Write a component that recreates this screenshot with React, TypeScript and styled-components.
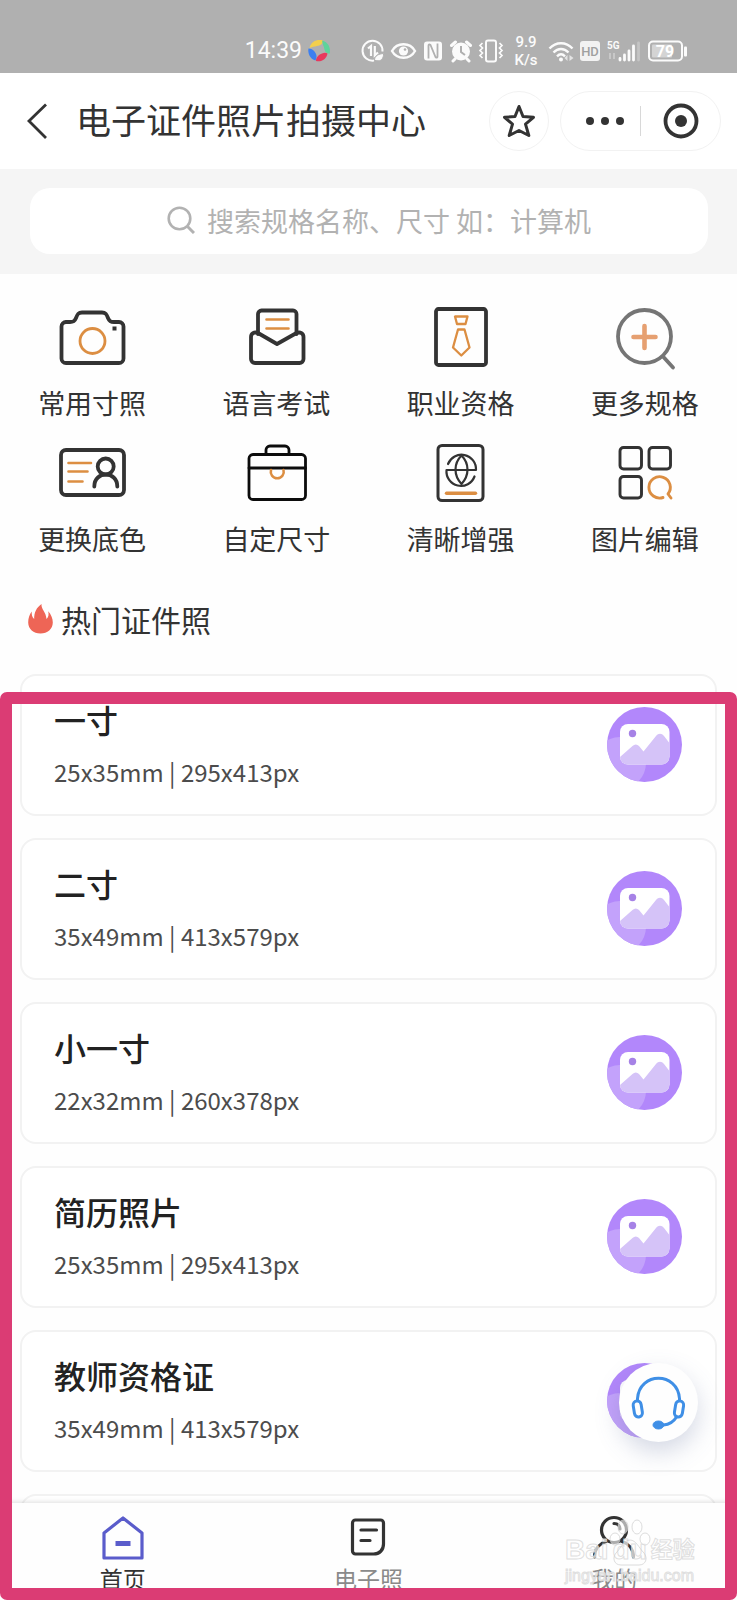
import React from "react";
import styled, { createGlobalStyle, css } from "styled-components";

const INK = "#333333";
const ORANGE = "#dc8e42";
const PURPLE = "#b287fb";
const PINK = "#db3c74";

const GlobalStyle = createGlobalStyle`
  * { box-sizing: border-box; }
  html, body { margin: 0; padding: 0; background: #ffffff; }
  body {
    font-family: "Noto Sans CJK SC", "Noto Sans", sans-serif;
    color: ${INK};
  }
  button { font: inherit; color: inherit; }
  svg { display: block; flex: none; }
`;

const Screen = styled.div`
  display: flex;
  flex-direction: column;
  height: 100vh;
  overflow: hidden;
  background: #fefefe;
`;

/* ---------- status bar ---------- */

const StatusBar = styled.header`
  display: flex;
  flex: none;
  align-items: center;
  justify-content: flex-end;
  gap: 30px;
  height: 73px;
  padding: 28px 49px 0 0;
  background: #b0b0b0;
  color: #fbfbfb;
  font-family: Roboto, sans-serif;
`;

const StatusGroup = styled.div`
  display: flex;
  align-items: center;
  gap: 5px;
`;

const Clock = styled.time`
  font-size: 23px;
  line-height: 28px;
`;

const Speed = styled.span`
  width: 34px;
  font-size: 15px;
  line-height: 18px;
  font-weight: 500;
  text-align: center;
`;

/* ---------- title bar ---------- */

const TitleBar = styled.nav`
  display: flex;
  flex: none;
  align-items: center;
  height: 96px;
  padding: 0 16px 0 18px;
  background: #ffffff;
`;

const IconButton = styled.button`
  display: flex;
  align-items: center;
  justify-content: center;
  padding: 0;
  border: 0;
  background: none;
`;

const Title = styled.h1`
  flex: 1;
  margin: 0 0 0 18px;
  padding-bottom: 4px;
  font-size: 35px;
  line-height: 48px;
  font-weight: 400;
  white-space: nowrap;
`;

const RoundButton = styled(IconButton)`
  width: 60px;
  height: 60px;
  border: 1px solid #f2f2f2;
  border-radius: 30px;
`;

const Capsule = styled.div`
  display: flex;
  align-items: center;
  width: 161px;
  height: 60px;
  margin-left: 11px;
  border: 1px solid #f2f2f2;
  border-radius: 30px;
`;

const CapsuleButton = styled(IconButton)<{ $inset?: boolean }>`
  width: 79px;
  height: 58px;
  padding-left: ${(p) => (p.$inset ? "8px" : "0")};
`;

const Divider = styled.span`
  width: 1px;
  height: 30px;
  background: #d8d8d8;
`;

/* ---------- search ---------- */

const SearchArea = styled.form`
  flex: none;
  padding: 19px 29px 20px 30px;
  background: #f5f5f5;
`;

const SearchBox = styled.label`
  display: flex;
  align-items: center;
  justify-content: center;
  gap: 12px;
  height: 66px;
  padding: 0 0 2px 24px;
  border-radius: 20px;
  background: #ffffff;
`;

const SearchInput = styled.input`
  width: 388px;
  min-width: 0;
  height: 40px;
  padding: 0;
  border: 0;
  outline: 0;
  background: none;
  font-family: inherit;
  font-size: 27px;
  color: ${INK};

  &::placeholder {
    color: #b2b2b2;
    opacity: 1;
  }
`;

/* ---------- features ---------- */

const FeatureGrid = styled.section`
  display: grid;
  flex: none;
  grid-template-columns: repeat(4, 1fr);
  row-gap: 17px;
  padding-top: 28px;
`;

const Feature = styled.button`
  display: flex;
  flex-direction: column;
  align-items: center;
  gap: 11px;
  padding: 0;
  border: 0;
  background: none;
  font-size: 27px;
  line-height: 36px;
`;

const SectionTitle = styled.h2`
  display: flex;
  flex: none;
  align-items: center;
  gap: 8px;
  margin: 42px 0 35px;
  padding-left: 28px;
  font-size: 30px;
  line-height: 40px;
  font-weight: 400;
`;

/* ---------- list ---------- */

const Highlighted = styled.main`
  position: relative;
  display: flex;
  flex: 1;
  flex-direction: column;
  min-height: 0;
`;

const HighlightFrame = styled.div`
  position: absolute;
  inset: 18px 0 0;
  border-radius: 7px;
  pointer-events: none;

  &::after {
    content: "";
    position: absolute;
    inset: 0;
    border: 12px solid ${PINK};
    border-radius: 7px;
  }
`;

const CardList = styled.ul`
  display: flex;
  flex: 1;
  flex-direction: column;
  gap: 22px;
  min-height: 0;
  margin: 0;
  padding: 0 20px;
  overflow-y: auto;
  scrollbar-width: none;
  list-style: none;
`;

const Card = styled.li`
  display: flex;
  flex: none;
  align-items: center;
  justify-content: space-between;
  height: 142px;
  padding: 0 33px 2px 32px;
  border: 2px solid #f2f2f2;
  border-radius: 16px;
  background: #ffffff;
`;

const CardText = styled.div`
  display: flex;
  flex-direction: column;
  gap: 13px;
  padding-top: 2px;
`;

const CardTitle = styled.h3`
  margin: 0;
  font-size: 32px;
  line-height: 40px;
  font-weight: 500;
  color: #222222;
`;

const CardSize = styled.p`
  margin: 0;
  font-size: 24px;
  line-height: 40px;
  color: #4c4c4c;
`;

/* ---------- floating parts ---------- */

const ServiceButton = styled.button`
  position: absolute;
  right: 39px;
  bottom: 158px;
  width: 79px;
  height: 79px;
  padding: 0;
  border: 0;
  border-radius: 50%;
  background: #fefefe;
  box-shadow: 0 10px 24px rgba(90, 105, 150, 0.26);
`;

const TabBar = styled.nav`
  position: relative;
  display: grid;
  flex: none;
  grid-template-columns: repeat(3, 1fr);
  height: 97px;
  padding-top: 12px;
  background: #fefefe;
  box-shadow: 0 -1px 5px rgba(0, 0, 0, 0.13);
`;

const Tab = styled.button<{ $active?: boolean }>`
  display: flex;
  flex-direction: column;
  align-items: center;
  gap: 3px;
  padding: 0;
  border: 0;
  background: none;
  font-size: 23px;
  line-height: 28px;
  color: #8a8a8a;
  ${(p) =>
    p.$active &&
    css`
      color: ${INK};
    `}
`;

const Watermark = styled.div`
  position: absolute;
  right: 40px;
  bottom: 14px;
  width: 132px;
  font-family: "Liberation Sans", "Noto Sans CJK SC", sans-serif;
  color: rgba(255, 255, 255, 0.7);
  -webkit-text-stroke: 1px rgba(215, 215, 215, 0.8);
  white-space: nowrap;
  pointer-events: none;
`;

const WatermarkBrand = styled.div`
  display: flex;
  align-items: center;
  gap: 4px;
  font-size: 28px;
  line-height: 32px;
  font-weight: 700;
`;

const WatermarkCn = styled.span`
  font-size: 22px;
`;

const WatermarkUrl = styled.div`
  font-size: 16px;
  line-height: 20px;
`;

const Paw = styled.svg`
  position: absolute;
  left: 44px;
  top: -18px;
`;

/* ---------- status icons ---------- */

const StatusIcons = () => (
  <>
    <svg width="24" height="24" viewBox="0 0 24 24" fill="none" stroke="#fbfbfb" strokeWidth="2">
      <path d="M21.5 12.5A10 10 0 1 0 13 21.6" />
      <path d="M7 9.500 10 7v10M17 13.500 13.800 16.500V7" strokeWidth="2.200" />
      <path d="M13.500 21.500c0-5 4-6.500 9-7 .500 5-3 8.500-7 7z" fill="#fbfbfb" stroke="#b0b0b0" strokeWidth="1" />
    </svg>
    <svg width="27" height="22" viewBox="0 0 27 22" fill="none" stroke="#fbfbfb" strokeWidth="2.400">
      <path d="M2 11c5-9 18-9 23 0-5 9-18 9-23 0z" />
      <circle cx="13.500" cy="11" r="4.600" fill="#fbfbfb" stroke="none" />
      <circle cx="15" cy="9.500" r="1.300" fill="#b0b0b0" stroke="none" />
    </svg>
    <svg width="22" height="22" viewBox="0 0 22 22">
      <rect x="2" y="1.500" width="18" height="19" rx="3" fill="#fbfbfb" />
      <path d="M6.500 18.500V5.500c0-1.500 1-1.500 2-.500l5 12c1 1 2 1 2-.500V3.500" fill="none" stroke="#b0b0b0" strokeWidth="1.800" />
    </svg>
    <svg width="24" height="24" viewBox="0 0 24 24">
      <circle cx="12" cy="12.500" r="9" fill="#fbfbfb" />
      <path d="M2.500 6.500 6.500 3M21.500 6.500 17.500 3M6 20l-2 2M18 20l2 2" stroke="#fbfbfb" strokeWidth="3" strokeLinecap="round" />
      <path d="M12 7v6l4 3" fill="none" stroke="#b0b0b0" strokeWidth="2" />
    </svg>
    <svg width="26" height="24" viewBox="0 0 26 24" fill="none" stroke="#fbfbfb" strokeWidth="2">
      <rect x="8" y="1.500" width="10" height="21" rx="2" />
      <path d="M4.500 4 2 6.500 4.500 9 2 11.500 4.500 14 2 16.500 4.500 19M21.500 4 24 6.500 21.500 9 24 11.500 21.500 14 24 16.500 21.500 19" strokeWidth="1.700" />
    </svg>
  </>
);

const SignalIcons = () => (
  <>
    <svg width="26" height="24" viewBox="0 0 26 24" fill="none" stroke="#fbfbfb" strokeWidth="2.400">
      <path d="M1.500 9.500c6.500-7 16.500-7 23 0M5.500 13.500c4.500-4.600 10.500-4.600 15 0M9 17.300c2.500-2.500 5.500-2.500 8 0" />
      <circle cx="13" cy="20.500" r="2" fill="#fbfbfb" stroke="none" />
      <path d="M19.500 16v6l-3-3zM21.500 16v6l4-3z" fill="#e4e4e4" stroke="none" />
    </svg>
    <svg width="22" height="22" viewBox="0 0 22 22">
      <rect x="1" y="1" width="20" height="20" rx="3" fill="#f2f2f2" />
      <text x="11" y="16" textAnchor="middle" fontFamily="Roboto, sans-serif" fontSize="13" fontWeight="500" fill="#a0a0a0">HD</text>
    </svg>
    <svg width="36" height="26" viewBox="0 0 36 26">
      <text x="1" y="11" fontFamily="Roboto, sans-serif" fontSize="10" fontWeight="700" fill="#fbfbfb">5G</text>
      <path d="M4 15v6M8 15v6" stroke="#cfcfcf" strokeWidth="1.500" />
      <path d="M14 20.500V22M18.500 17v5M23 13v9M27.500 8v14" stroke="#fbfbfb" strokeWidth="2.800" strokeLinecap="round" />
      <path d="M32.500 5v17" stroke="#c4c4c4" strokeWidth="2.800" strokeLinecap="round" />
    </svg>
    <svg width="41" height="24" viewBox="0 0 41 24">
      <rect x="2" y="2.500" width="33" height="19" rx="4" fill="none" stroke="#fbfbfb" strokeWidth="2" />
      <rect x="5" y="5.500" width="20" height="13" rx="1" fill="#d4d4d4" />
      <rect x="37" y="7.500" width="3" height="10" rx="1" fill="#fbfbfb" />
      <text x="18" y="18" textAnchor="middle" fontFamily="Roboto, sans-serif" fontSize="16" fontWeight="700" fill="#ffffff">79</text>
    </svg>
  </>
);

const PinwheelLogo = () => (
  <svg width="24" height="24" viewBox="0 0 24 24">
    <path d="M2.500 9C4 2.500 10 0 16 1.500c0 3.500-3 5-6 5.500-3 .500-4.500 1-7.500 2z" fill="#f3cf4c" />
    <path d="M15 1.500c6 1.500 9 7 7.800 13-3 .500-5-1.500-5.500-4.500C17 7 15.500 5.500 15 1.500z" fill="#5fd39b" />
    <path d="M20.500 14.500C19.500 20 14.500 23.500 9 22c0-4 3-6.500 6-7.500 2-.800 4-1 5.500 0z" fill="#e8395c" />
    <path d="M1.500 9.500C.500 14 3 20 8.500 21.500c2-4 1-6.500-1-9C6 10.500 4 9.500 1.500 9.500z" fill="#3c7ff0" />
  </svg>
);

/* ---------- feature icons ---------- */

const FeatureIcon = ({ stroke = INK, width = 3.8, children }: { stroke?: string; width?: number; children: React.ReactNode }) => (
  <svg width="72" height="72" viewBox="0 0 72 72" fill="none" stroke={stroke} strokeWidth={width} strokeLinecap="round" strokeLinejoin="round">
    {children}
  </svg>
);

const CameraIcon = () => (
  <FeatureIcon>
    <path d="M9.500 20H14c4 0 5-1.500 6-4 1.500-4 2.500-5.500 6-5.500h20c3.500 0 4.500 1.500 6 5.500 1 2.500 2 4 6 4h5a4.500 4.500 0 0 1 4.500 4.500v32a4.500 4.500 0 0 1-4.500 4.500H10a4.500 4.500 0 0 1-4.500-4.500v-32A4.500 4.500 0 0 1 10 20" />
    <circle cx="36.500" cy="39" r="12.500" stroke={ORANGE} strokeWidth="2.800" />
    <rect x="56.500" y="24.500" width="4" height="4" fill={INK} stroke="none" />
  </FeatureIcon>
);

const EnvelopeIcon = () => (
  <FeatureIcon>
    <path d="M18 32V12a3.500 3.500 0 0 1 3.500-3.500H53a3.500 3.500 0 0 1 3.500 3.500v20" />
    <path d="M18 31c-4-1.500-7 .500-7 4v22a4 4 0 0 0 4 4h44.500a4 4 0 0 0 4-4V35c0-3.500-3-5.500-7-4L37 42z" />
    <path d="M26.500 17.500h22M26.500 26.500h22" stroke={ORANGE} strokeWidth="2.600" />
  </FeatureIcon>
);

const TieIcon = () => (
  <FeatureIcon>
    <rect x="11" y="7" width="50" height="56" rx="2.500" />
    <path d="M30 14.500h12.500L40.500 22h-8.500zM33 27.500h6.500l5 18L36.300 53.500l-8.300-8z" stroke={ORANGE} strokeWidth="2.300" />
  </FeatureIcon>
);

const ZoomInIcon = () => (
  <FeatureIcon stroke="#757575" width={3.8}>
    <circle cx="35.500" cy="34.500" r="26.500" />
    <path d="M54 54.500 64 65.500" />
    <path d="M35.500 24v22M24.500 35h22" stroke="#e6a071" strokeWidth="4.600" />
  </FeatureIcon>
);

const IdCardIcon = () => (
  <FeatureIcon>
    <rect x="5" y="12" width="63" height="45" rx="5" />
    <path d="M12.500 25H35M12.500 33.500H31.500M12.500 43.500H26.500" stroke={ORANGE} strokeWidth="2.600" />
    <circle cx="49.700" cy="28.500" r="8" />
    <path d="M38.300 48.500c0-16 23-16 23 0" />
  </FeatureIcon>
);

const BriefcaseIcon = () => (
  <FeatureIcon stroke="#0c0c0c" width={2.8}>
    <rect x="9" y="16.500" width="56.500" height="45" rx="4" />
    <path d="M26 16V12a4 4 0 0 1 4-4h15a4 4 0 0 1 4 4v4M9 30h56.500" />
    <path d="M31 32a6.500 6.500 0 1 0 12.500 0" stroke={ORANGE} strokeWidth="2.600" />
  </FeatureIcon>
);

const PassportIcon = () => (
  <FeatureIcon width={3}>
    <rect x="13" y="7.500" width="45" height="55" rx="4" />
    <path d="M23 26a14.500 14.500 0 0 1 28 6H21.500a14.500 14.500 0 0 0 28 6.500" strokeWidth="2.200" />
    <path d="M36.500 17.500c-8 8-8 20 0 28.500 8-8.500 8-20.500 0-28.500z" strokeWidth="2.200" />
    <path d="M21.500 55.300h29" stroke={ORANGE} strokeWidth="3.400" />
  </FeatureIcon>
);

const GridSearchIcon = () => (
  <FeatureIcon width={2.9}>
    <rect x="11" y="9.500" width="21.500" height="21.500" rx="3.500" />
    <rect x="40" y="9.500" width="21.500" height="21.500" rx="3.500" />
    <rect x="11" y="38.500" width="21.500" height="21.500" rx="3.500" />
    <path d="M54 59.500a10.700 10.700 0 1 1 5-3.500L62 60" stroke={ORANGE} />
  </FeatureIcon>
);

const FlameIcon = () => (
  <svg width="25" height="30" viewBox="0 0 25 30">
    <path d="M13.500 0c-.5 5.500 4.500 7.500 5 15 2-2 2.500-4.500 1.700-7.800 3 3.300 4.600 7.300 4.600 11.300 0 6.500-5.300 11-12.300 11S.2 25 .2 18.500C.2 14 1.500 10.500 3.800 7.500c-.3 3 .2 5.500 2.400 7.500C6 8.500 8.500 3.500 13.500 0z" fill="#ee6556" />
  </svg>
);

const PhotoBadge = () => (
  <svg width="75" height="75" viewBox="0 0 75 75">
    <defs>
      <clipPath id="badge-disc">
        <circle cx="37.500" cy="37.500" r="37.500" />
      </clipPath>
      <clipPath id="badge-photo">
        <rect x="13" y="17" width="49.500" height="40.500" rx="8" />
      </clipPath>
    </defs>
    <g clipPath="url(#badge-disc)">
      <rect width="75" height="75" fill={PURPLE} />
      <circle cx="13" cy="56" r="26" fill="#c3a2fb" />
    </g>
    <g clipPath="url(#badge-photo)">
      <rect x="12" y="16" width="52" height="42" fill="#ffffff" />
      <path d="M12 51 25.500 39c2-2 4.500-2 6.500 0l4.500 5.500L49 29c2.500-3 5.500-3 8 0l7 9v20H12z" fill="#d5c3f8" />
    </g>
    <circle cx="25.500" cy="26.500" r="3.700" fill="#a682e6" />
  </svg>
);

const HeadsetIcon = () => (
  <svg width="79" height="79" viewBox="0 0 79 79" fill="none" stroke="#3f8fe6" strokeWidth="3" strokeLinecap="round">
    <path d="M18.500 37.500v-2c2-27 40-27 42 0v2" />
    <rect x="14.800" y="38" width="8" height="16" rx="4" transform="rotate(-9 18.800 46)" />
    <rect x="56" y="38" width="8" height="16" rx="4" transform="rotate(9 60 46)" />
    <path d="M57.500 54c-3 5-7 7.500-13 8" />
    <ellipse cx="39.500" cy="62" rx="5.500" ry="4" fill="#3f8fe6" strokeWidth="1" />
  </svg>
);

/* ---------- tab icons ---------- */

const TabIcon = ({ stroke = INK, children }: { stroke?: string; children: React.ReactNode }) => (
  <svg width="46" height="46" viewBox="0 0 46 46" fill="none" stroke={stroke} strokeWidth="3.200" strokeLinecap="round" strokeLinejoin="round">
    {children}
  </svg>
);

const features = [
  { label: "常用寸照", Icon: CameraIcon },
  { label: "语言考试", Icon: EnvelopeIcon },
  { label: "职业资格", Icon: TieIcon },
  { label: "更多规格", Icon: ZoomInIcon },
  { label: "更换底色", Icon: IdCardIcon },
  { label: "自定尺寸", Icon: BriefcaseIcon },
  { label: "清晰增强", Icon: PassportIcon },
  { label: "图片编辑", Icon: GridSearchIcon },
];

const photos = [
  { name: "一寸", size: "25x35mm | 295x413px" },
  { name: "二寸", size: "35x49mm | 413x579px" },
  { name: "小一寸", size: "22x32mm | 260x378px" },
  { name: "简历照片", size: "25x35mm | 295x413px" },
  { name: "教师资格证", size: "35x49mm | 413x579px" },
];

export default function App() {
  return (
    <Screen>
      <GlobalStyle />
      <StatusBar>
        <StatusGroup>
          <Clock>14:39</Clock>
          <PinwheelLogo />
        </StatusGroup>
        <StatusGroup>
          <StatusIcons />
          <Speed>9.9 K/s</Speed>
          <SignalIcons />
        </StatusGroup>
      </StatusBar>

      <TitleBar>
        <IconButton type="button">
          <svg width="40" height="40" viewBox="0 0 40 40" fill="none" stroke={INK} strokeWidth="2.800">
            <path d="M28 3.500 11 20l17 17" />
          </svg>
        </IconButton>
        <Title>电子证件照片拍摄中心</Title>
        <RoundButton type="button">
          <svg width="34" height="36" viewBox="0 0 34 36" fill="none" stroke={INK} strokeWidth="3" strokeLinejoin="round">
            <path d="M17 3.500 21 13.500 31.500 14.300 23.500 21.200 26.800 32.500 17 27.500 7.200 32.500 10.500 21.200 2.500 14.300 13 13.500z" />
          </svg>
        </RoundButton>
        <Capsule>
          <CapsuleButton type="button" $inset>
            <svg width="40" height="10" viewBox="0 0 40 10" fill={INK}>
              <circle cx="5" cy="5" r="4" />
              <circle cx="20" cy="5" r="4" />
              <circle cx="35" cy="5" r="4" />
            </svg>
          </CapsuleButton>
          <Divider />
          <CapsuleButton type="button">
            <svg width="36" height="36" viewBox="0 0 36 36" fill="none">
              <circle cx="18" cy="18" r="15.500" stroke={INK} strokeWidth="3.800" />
              <circle cx="18" cy="18" r="6" fill={INK} />
            </svg>
          </CapsuleButton>
        </Capsule>
      </TitleBar>

      <SearchArea>
        <SearchBox>
          <svg width="28" height="28" viewBox="0 0 28 28" fill="none" stroke="#b2b2b2" strokeWidth="2.600">
            <circle cx="12.500" cy="12.500" r="10.800" />
            <path d="m20 20 7 7" strokeWidth="3" />
          </svg>
          <SearchInput type="text" placeholder="搜索规格名称、尺寸 如：计算机" />
        </SearchBox>
      </SearchArea>

      <FeatureGrid>
        {features.map(({ label, Icon }) => (
          <Feature type="button" key={label}>
            <Icon />
            {label}
          </Feature>
        ))}
      </FeatureGrid>

      <SectionTitle>
        <FlameIcon />
        热门证件照
      </SectionTitle>

      <Highlighted>
        <CardList>
          {photos.map((photo) => (
            <Card key={photo.name}>
              <CardText>
                <CardTitle>{photo.name}</CardTitle>
                <CardSize>{photo.size}</CardSize>
              </CardText>
              <PhotoBadge />
            </Card>
          ))}
          <Card />
        </CardList>

        <TabBar>
          <Tab type="button" $active>
            <TabIcon stroke="#5a5ccb">
              <path d="M23 3 42 18v25H4V18z" />
              <path d="M15.500 28.500h15" strokeWidth="5" strokeLinecap="butt" />
            </TabIcon>
            首页
          </Tab>
          <Tab type="button">
            <TabIcon>
              <path d="M10.500 5h25a3 3 0 0 1 3 3v21c0 6-4 10-10 10h-18a3 3 0 0 1-3-3V8a3 3 0 0 1 3-3zM16 15h15.500M16 25.500h9" />
            </TabIcon>
            电子照
          </Tab>
          <Tab type="button">
            <TabIcon>
              <circle cx="23" cy="15" r="12.500" />
              <path d="M23 8.500c4 0 6 2.500 6 5.500M3.500 42c0-8 5-13.500 11.500-15.500M42.500 42c0-8-5-13.500-11.500-15.500" />
            </TabIcon>
            我的
          </Tab>
        </TabBar>

        <ServiceButton type="button">
          <HeadsetIcon />
        </ServiceButton>

        <Watermark>
          <WatermarkBrand>
            <span>Bai</span>
            <span>du</span>
            <WatermarkCn>经验</WatermarkCn>
          </WatermarkBrand>
          <WatermarkUrl>jingyan.baidu.com</WatermarkUrl>
          <Paw width="42" height="60" viewBox="0 0 42 60" fill="rgba(255,255,255,.6)" stroke="rgba(205,205,205,.7)">
            <ellipse cx="14" cy="11" rx="5" ry="7" />
            <ellipse cx="28" cy="11" rx="5" ry="7" />
            <ellipse cx="6" cy="23" rx="5" ry="6" />
            <ellipse cx="36" cy="23" rx="5" ry="6" />
            <path d="M21 24c6 0 9 8 14 13 4 5 2 12-5 12H12c-7 0-9-7-5-12 5-5 8-13 14-13z" fill="none" />
          </Paw>
        </Watermark>

        <HighlightFrame />
      </Highlighted>
    </Screen>
  );
}
